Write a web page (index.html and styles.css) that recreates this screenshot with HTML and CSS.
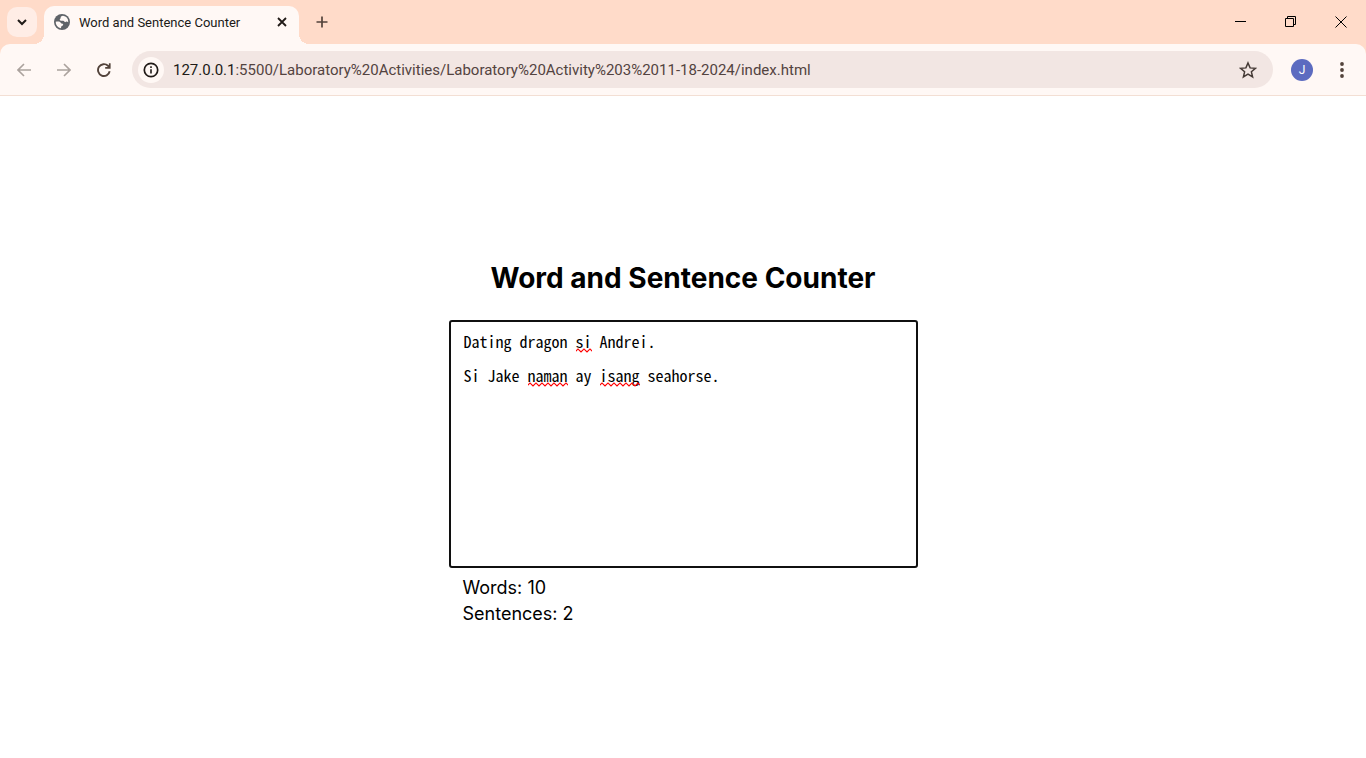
FILE: index.html
```html
<!DOCTYPE html>
<html lang="en">
<head>
<meta charset="utf-8">
<meta name="viewport" content="width=device-width, initial-scale=1">
<title>Word and Sentence Counter</title>
<link rel="stylesheet" href="styles.css">
</head>
<body>
<div class="browser">
  <header class="chrome">
    <div class="tab-strip">
      <button class="tab-search" aria-label="Search tabs">
        <svg width="12" height="12" viewBox="0 0 12 12"><path d="M2 4l4 4 4-4" fill="none" stroke="#201a17" stroke-width="2"/></svg>
      </button>
      <div class="tab">
        <svg class="favicon" width="16" height="16" viewBox="0 0 16 16"><circle cx="8" cy="8" r="8" fill="#5f6368"/><path d="M9 1.800c-1.500.3-2.700 1-2.300 2 .2.700-.6.900-.9 1.500-.2.700.3 1.400 1.200 1.400h2.300c.8 0 .8 1.200 1.700 1.400.8.200 1.200-.8 2-.5.500.200.900.6 1.300.6A6.400 6.400 0 0 0 9 1.800zM1.700 7.700c1.300-.2 3.300-.3 4.300.2.900.5.900 1.500 1.900 1.600 1 .1 1.500.6 1.200 1.400-.3.700-1.300.6-1.700 1.300-.3.600-.2 1.400-.5 2A6.300 6.300 0 0 1 1.700 7.700z" fill="#fff8f5"/></svg>
        <span class="tab-title">Word and Sentence Counter</span>
        <button class="tab-close" aria-label="Close tab">
          <svg width="10" height="10" viewBox="0 0 10 10"><path d="M1 1l8 8M9 1L1 9" stroke="#201a17" stroke-width="1.800"/></svg>
        </button>
      </div>
      <button class="new-tab" aria-label="New tab">
        <svg width="12" height="12" viewBox="0 0 12 12"><path d="M6 .5v11M.5 6h11" stroke="#53433b" stroke-width="1.700"/></svg>
      </button>
      <div class="window-controls">
        <button aria-label="Minimize"><svg width="12" height="12" viewBox="0 0 12 12"><path d="M0 5.500h11" stroke="#000"/></svg></button>
        <button aria-label="Restore"><svg width="12" height="12" viewBox="0 0 12 12"><path d="M.5 2.500h8v8h-8zM2.500 2.500v-2h8v8H8.500" fill="none" stroke="#000"/></svg></button>
        <button aria-label="Close"><svg width="12" height="12" viewBox="0 0 12 12"><path d="M.5.5l11 11M11.500.5l-11 11" stroke="#000"/></svg></button>
      </div>
    </div>
    <div class="toolbar">
      <nav class="nav-buttons">
        <button aria-label="Back" disabled><svg width="14" height="14" viewBox="0 0 14 14"><path d="M14 7H1.500M7 1L1 7l6 6" fill="none" stroke="#aba29d" stroke-width="1.600"/></svg></button>
        <button aria-label="Forward" disabled><svg width="14" height="14" viewBox="0 0 14 14"><path d="M0 7h12.500M7 1l6 6-6 6" fill="none" stroke="#aba29d" stroke-width="1.600"/></svg></button>
        <button aria-label="Reload"><svg width="14" height="14" viewBox="0 0 14 14"><path d="M12.700 8.300A5.900 5.900 0 1 1 11 2.800l1.500 1.500" fill="none" stroke="#53433b" stroke-width="1.900"/><path d="M13.600.3v5.400H8.200V4h3.700V.3z" fill="#53433b"/></svg></button>
      </nav>
      <div class="address-bar">
        <button class="site-info" aria-label="View site information"><svg width="16" height="16" viewBox="0 0 16 16"><circle cx="8" cy="8" r="6.700" fill="none" stroke="#201a17" stroke-width="1.700"/><path d="M8 7.200v4.200M8 4.300v1.700" stroke="#201a17" stroke-width="1.600"/></svg></button>
        <span class="url"><span class="host">127.0.0.1</span>:5500/Laboratory%20Activities/Laboratory%20Activity%203%2011-18-2024/index.html</span>
        <button class="bookmark" aria-label="Bookmark this tab"><svg width="18" height="18" viewBox="0 0 18 18"><path d="M9 2l2.100 4.900 5.300.4-4 3.500 1.200 5.200L9 13.200 4.400 16l1.200-5.200-4-3.500 5.300-.4z" fill="none" stroke="#453a36" stroke-width="1.500"/></svg></button>
      </div>
      <button class="profile" aria-label="Profile">J</button>
      <button class="menu" aria-label="Menu"><svg width="4" height="16" viewBox="0 0 4 16"><g fill="#53433b"><circle cx="2" cy="2" r="1.900"/><circle cx="2" cy="8" r="1.900"/><circle cx="2" cy="14" r="1.900"/></g></svg></button>
    </div>
  </header>
  <main class="page">
    <section class="counter">
      <h1 class="heading"><label for="text">Word and Sentence Counter</label></h1>
      <div class="editor">
        <textarea class="text" id="text" spellcheck="false">Dating dragon si Andrei.

Si Jake naman ay isang seahorse.</textarea>
        <svg class="spelling" aria-hidden="true">
          <defs><pattern id="wave" y="15" width="6" height="17" patternUnits="userSpaceOnUse"><path d="M-3 4L0 1 3 4 6 1 9 4" fill="none" stroke="#f00" stroke-width="1.200"/></pattern></defs>
          <rect class="mark-si" fill="url(#wave)"/>
          <rect class="mark-naman" fill="url(#wave)"/>
          <rect class="mark-isang" fill="url(#wave)"/>
        </svg>
      </div>
      <div class="results">
        <p>Words: <output for="text">10</output></p>
        <p>Sentences: <output for="text">2</output></p>
      </div>
    </section>
  </main>
</div>
</body>
</html>
```
FILE: styles.css
```css
* { box-sizing: border-box; }

body {
  margin: 0;
  background: #fff;
  color: #000;
  font-family: Roboto, "Noto Sans", sans-serif;
}

button {
  display: flex;
  align-items: center;
  justify-content: center;
  padding: 0;
  border: 0;
  background: none;
  font: inherit;
}

.browser {
  display: flex;
  flex-direction: column;
  min-height: 100vh;
}

.chrome { background: #ffdbc9; }

.tab-strip {
  display: flex;
  align-items: center;
  height: 44px;
  padding-left: 7px;
}

.tab-search {
  width: 30px;
  height: 30px;
  border-radius: 10px;
  background: #ffede6;
}

.tab {
  position: relative;
  display: flex;
  align-items: center;
  align-self: flex-end;
  width: 255px;
  height: 38px;
  margin-left: 7px;
  padding: 0 12px 6px 10px;
  border-radius: 10px 10px 0 0;
  background: #fff8f5;
}

.tab::before,
.tab::after {
  content: "";
  position: absolute;
  bottom: 0;
  width: 10px;
  height: 10px;
}

.tab::before {
  right: 100%;
  background: radial-gradient(circle at 0 0, transparent 10px, #fff8f5 10px);
}

.tab::after {
  left: 100%;
  background: radial-gradient(circle at 100% 0, transparent 10px, #fff8f5 10px);
}

.tab-title {
  flex: 1;
  margin-left: 9px;
  padding-top: 2px;
  color: #201a17;
  font-size: 13px;
  line-height: 18px;
  white-space: nowrap;
}

.new-tab {
  width: 28px;
  height: 28px;
  margin-left: 9px;
}

.window-controls {
  display: flex;
  align-self: stretch;
  margin-left: auto;
}

.window-controls button { width: 50px; }

.toolbar {
  display: flex;
  align-items: center;
  height: 52px;
  padding: 0 12px 0 10px;
  border-bottom: 1px solid #f3dfd4;
  border-radius: 10px 10px 0 0;
  background: #fff8f5;
}

.nav-buttons {
  display: flex;
  gap: 12px;
}

.nav-buttons button {
  width: 28px;
  height: 28px;
}

.address-bar {
  display: flex;
  flex: 1;
  align-items: center;
  min-width: 0;
  height: 37px;
  margin-left: 14px;
  padding: 0 16px 0 6px;
  border-radius: 19px;
  background: #f2e6e3;
}

.site-info {
  width: 26px;
  height: 26px;
  border-radius: 50%;
  background: #fff8f5;
}

.url {
  flex: 1;
  margin-left: 9px;
  overflow: hidden;
  color: #53433f;
  font-size: 15px;
  line-height: 20px;
  white-space: nowrap;
}

.host { color: #201a17; }

.profile {
  width: 22px;
  height: 22px;
  margin-left: 18px;
  border-radius: 50%;
  background: #5c6bc0;
  color: #fff;
  font-size: 12px;
}

.menu {
  width: 24px;
  height: 28px;
  margin-left: 17px;
}

.page {
  display: flex;
  flex: 1;
  align-items: center;
  justify-content: center;
}

.counter {
  width: 469px;
  max-width: 90%;
}

.heading {
  margin: 30px 0 22px;
  font-family: Inter, sans-serif;
  font-size: 28px;
  font-weight: 700;
  line-height: 40px;
  text-align: center;
}

.editor {
  position: relative;
  font-family: "Noto Sans Mono CJK SC", "DejaVu Sans Mono", monospace;
  font-size: 16px;
  line-height: 17px;
}

.text {
  display: block;
  width: 100%;
  height: 248px;
  padding: 11px 13px;
  border: 2px solid #101010;
  border-radius: 3px;
  outline: 0;
  background: #fff;
  color: #000;
  font: inherit;
  resize: none;
}

.spelling {
  position: absolute;
  top: 13px;
  left: 15px;
  width: 32ch;
  height: 56px;
  pointer-events: none;
}

.spelling rect { height: 5px; }
.mark-si { x: 14ch; y: 15px; width: 2ch; }
.mark-naman { x: 8ch; y: 49px; width: 5ch; }
.mark-isang { x: 17ch; y: 49px; width: 5ch; }

.results {
  padding: 7px 14px 0;
  font-family: Inter, sans-serif;
  font-size: 18px;
  line-height: 26px;
}

.results p { margin: 0; }
```
